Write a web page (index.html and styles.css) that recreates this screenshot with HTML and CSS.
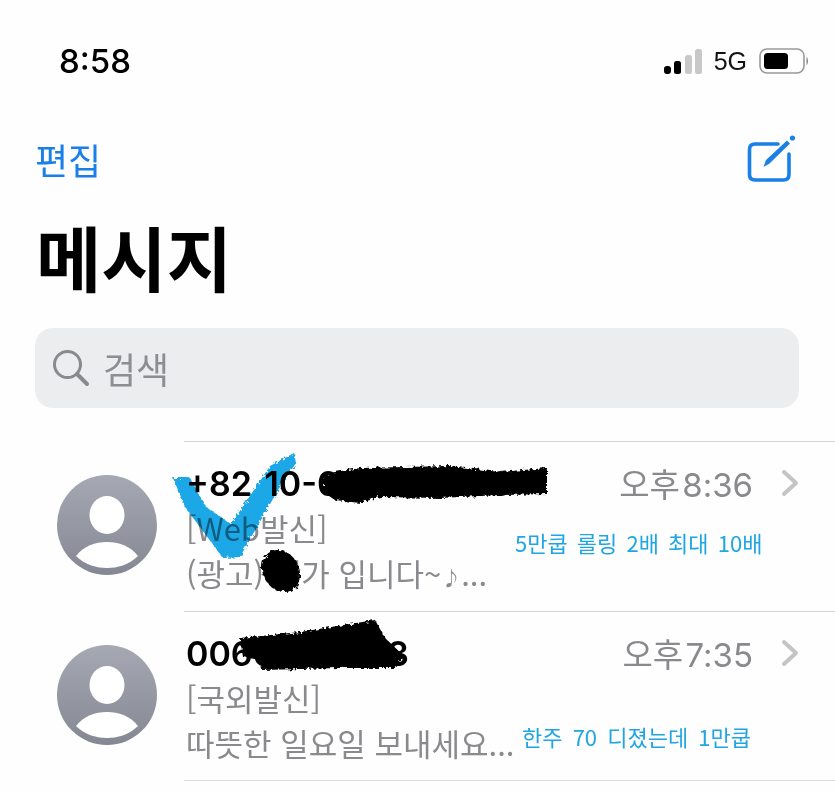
FILE: index.html
```html
<!DOCTYPE html>
<html lang="ko">
<head>
    <meta charset="UTF-8">
    <meta name="viewport" content="width=device-width, initial-scale=1.0">
    <title>메시지</title>
    <link rel="stylesheet" href="styles.css">
</head>
<body>
    <div class="page">
        <!-- Status bar -->
        <div class="status-bar">
            <span class="clock">8:58</span>
            <div class="status-icons">
                <svg class="signal" width="38" height="25" viewBox="0 0 38 25">
                    <rect x="0" y="17" width="7" height="8" rx="3" fill="#000"/>
                    <rect x="10" y="12" width="7" height="13" rx="2.5" fill="#000"/>
                    <rect x="21" y="6" width="7" height="19" rx="2.5" fill="#c8c8c8"/>
                    <rect x="31" y="0" width="7" height="25" rx="2.5" fill="#c8c8c8"/>
                </svg>
                <span class="network">5G</span>
                <svg class="battery" width="50" height="26" viewBox="0 0 50 26">
                    <rect x="1" y="1" width="44" height="24" rx="7" fill="none" stroke="#999" stroke-width="1.6"/>
                    <rect x="5" y="5" width="24" height="16" rx="3.5" fill="#000"/>
                    <path d="M47.5 9 C49.5 10 49.5 16 47.5 17 Z" fill="#888"/>
                </svg>
            </div>
        </div>

        <!-- Nav -->
        <div class="nav">
            <span class="edit">편집</span>
            <svg class="compose" width="48" height="52" viewBox="0 0 48 52">
                <path d="M31 11 H8 Q2.5 11 2.5 16.5 V41.5 Q2.5 47 8 47 H36.5 Q42 47 42 41.5 V21" fill="none" stroke="#1a7fe6" stroke-width="3.6" stroke-linecap="round"/>
                <path d="M16.5 34 L19 27 L40 7.5 L43 10.5 L22.5 30.5 Z" fill="#1a7fe6"/>
                <circle cx="45.5" cy="5" r="2.6" fill="#1a7fe6"/>
            </svg>
        </div>

        <h1 class="title">메시지</h1>

        <div class="search">
            <svg width="38" height="38" viewBox="0 0 38 38">
                <circle cx="15.5" cy="15.5" r="13" fill="none" stroke="#8a8a8e" stroke-width="3"/>
                <path d="M25 25 L35 35" stroke="#8a8a8e" stroke-width="4" stroke-linecap="round"/>
            </svg>
            <span>검색</span>
        </div>

        <!-- Message list -->
        <div class="list">
            <div class="row">
                <svg class="avatar" width="100" height="100" viewBox="0 0 100 100">
                    <defs>
                        <linearGradient id="avatarBg" x1="0" y1="0" x2="0" y2="1">
                            <stop offset="0" stop-color="#a6a9b3"/>
                            <stop offset="1" stop-color="#858893"/>
                        </linearGradient>
                    </defs>
                    <circle cx="50" cy="50" r="50" fill="url(#avatarBg)"/>
                    <ellipse cx="50" cy="40" rx="17.5" ry="19" fill="#fff"/>
                    <path d="M19 81 C27 71 38 67 50 67 C62 67 73 71 81 81 C72 90 60 93 50 93 C40 93 28 90 19 81 Z" fill="#fff"/>
                </svg>
                <div class="row-body">
                    <div class="row-top">
                        <span class="name name-first">+82 10-0000-0000</span>
                        <span class="time">오후 8:36</span>
                        <svg class="chevron" width="18" height="28" viewBox="0 0 18 28"><path d="M3 3 L15 14 L3 25" fill="none" stroke="#c4c4c6" stroke-width="4" stroke-linecap="round" stroke-linejoin="round"/></svg>
                    </div>
                    <div class="preview">[Web발신]</div>
                    <div class="preview">(광고) 대가 입니다~<span class="music">♪</span>...</div>
                </div>
                <span class="note note-first">5만쿱 롤링 2배 최대 10배</span>
            </div>
            <div class="row">
                <svg class="avatar" width="100" height="100" viewBox="0 0 100 100">
                    <circle cx="50" cy="50" r="50" fill="url(#avatarBg)"/>
                    <ellipse cx="50" cy="40" rx="17.5" ry="19" fill="#fff"/>
                    <path d="M19 81 C27 71 38 67 50 67 C62 67 73 71 81 81 C72 90 60 93 50 93 C40 93 28 90 19 81 Z" fill="#fff"/>
                </svg>
                <div class="row-body">
                    <div class="row-top">
                        <span class="name">0060000003</span>
                        <span class="time">오후 7:35</span>
                        <svg class="chevron" width="18" height="28" viewBox="0 0 18 28"><path d="M3 3 L15 14 L3 25" fill="none" stroke="#c4c4c6" stroke-width="4" stroke-linecap="round" stroke-linejoin="round"/></svg>
                    </div>
                    <div class="preview">[국외발신]</div>
                    <div class="preview">따뜻한 일요일 보내세요...</div>
                </div>
                <span class="note note-second">한주 70 디졌는데 1만쿱</span>
            </div>
        </div>

        <!-- Marker scribbled over the screenshot -->
        <svg class="marks" width="835" height="791" viewBox="0 0 835 791">
            <defs>
                <filter id="rough" x="-10%" y="-20%" width="120%" height="140%">
                    <feTurbulence type="fractalNoise" baseFrequency="0.3" numOctaves="2" seed="4"/>
                    <feDisplacementMap in="SourceGraphic" scale="6"/>
                </filter>
            </defs>
            <polygon class="check" filter="url(#rough)" points="173,478 190,478 206,507 231,524 254,490 270,466 294,453 296,463 278,490 240,557 223,558 185,507"/>
            <g filter="url(#rough)" fill="#000">
                <path d="M323 474 L360 468 L450 466 L500 472 L547 468 L547 494 L500 495 L440 498 L380 497 L360 503 L335 500 L323 492 Z"/>
                <path d="M240 638 L300 632 L375 620 L385 638 L403 655 L396 668 L340 668 L262 670 L260 660 L243 657 Z"/>
                <ellipse cx="281" cy="571" rx="18" ry="22" transform="rotate(-30 281 571)"/>
            </g>
        </svg>
    </div>
</body>
</html>
```

FILE: styles.css
```css
html, body {
    margin: 0;
    padding: 0;
    background-color: #fefefe;
    overflow: hidden;
}

.page {
    position: relative;
    width: 835px;
    height: 791px;
    overflow: hidden;
    font-family: "Inter", "Noto Sans CJK KR", sans-serif;
}

.status-bar {
    display: flex;
    justify-content: space-between;
    align-items: center;
    height: 44px;
    padding: 39px 26px 0 59px;
}

.clock {
    font-size: 33px;
    font-weight: 500;
    color: #000;
}

.status-icons {
    display: flex;
    align-items: center;
}

.network {
    font-family: "Liberation Sans", sans-serif;
    font-size: 25px;
    color: #111;
    margin: 0 12px 0 12px;
}

.nav {
    display: flex;
    justify-content: space-between;
    align-items: center;
    height: 52px;
    padding: 50px 40px 0 35px;
}

.edit {
    font-family: "Noto Sans CJK KR", sans-serif;
    font-size: 36px;
    color: #1a7fe6;
}

.title {
    margin: 29px 0 0 36px;
    height: 82px;
    font-family: "Noto Sans CJK KR", sans-serif;
    font-size: 71px;
    font-weight: 700;
    line-height: 82px;
    color: #000;
}

.search {
    display: flex;
    align-items: center;
    gap: 13px;
    height: 80px;
    margin: 32px 36px 0 35px;
    padding-left: 17px;
    border-radius: 18px;
    background-color: #ecedef;
    font-family: "Noto Sans CJK KR", sans-serif;
    font-size: 36px;
    color: #8e8e92;
}

.list {
    margin-top: 33px;
}

.row {
    position: relative;
    display: flex;
    height: 170px;
    padding-left: 57px;
}

.avatar {
    flex: none;
    margin-top: 34px;
}

.row-body {
    flex: 1;
    margin-left: 27px;
    padding: 19px 36px 0 2px;
    border-top: 1px solid #d4d4d6;
}

.row:last-child .row-body {
    border-bottom: 1px solid #dcdcde;
}

.row-top {
    display: flex;
    align-items: center;
    height: 44px;
}

.name {
    flex: 1;
    font-size: 34px;
    font-weight: 600;
    color: #000;
}

.name-first {
    word-spacing: 4px;
}

.time {
    font-size: 33px;
    word-spacing: -7px;
    color: #8a8a8e;
    margin-right: 28px;
}

.preview {
    font-family: "Noto Sans CJK KR", sans-serif;
    font-size: 31px;
    line-height: 45px;
    color: #8a8a8e;
    white-space: nowrap;
}

.music {
    font-size: 20px;
}

.note {
    position: absolute;
    font-family: "Noto Sans CJK KR", sans-serif;
    font-size: 22px;
    word-spacing: 4px;
    color: #1fa6e2;
    white-space: nowrap;
}

.note-first {
    left: 515px;
    top: 85px;
    word-spacing: 3px;
}

.note-second {
    left: 522px;
    top: 109px;
}

.marks {
    position: absolute;
    top: 0;
    left: 0;
    pointer-events: none;
}

.check {
    fill: #1fa9e8;
    mix-blend-mode: multiply;
}
```
